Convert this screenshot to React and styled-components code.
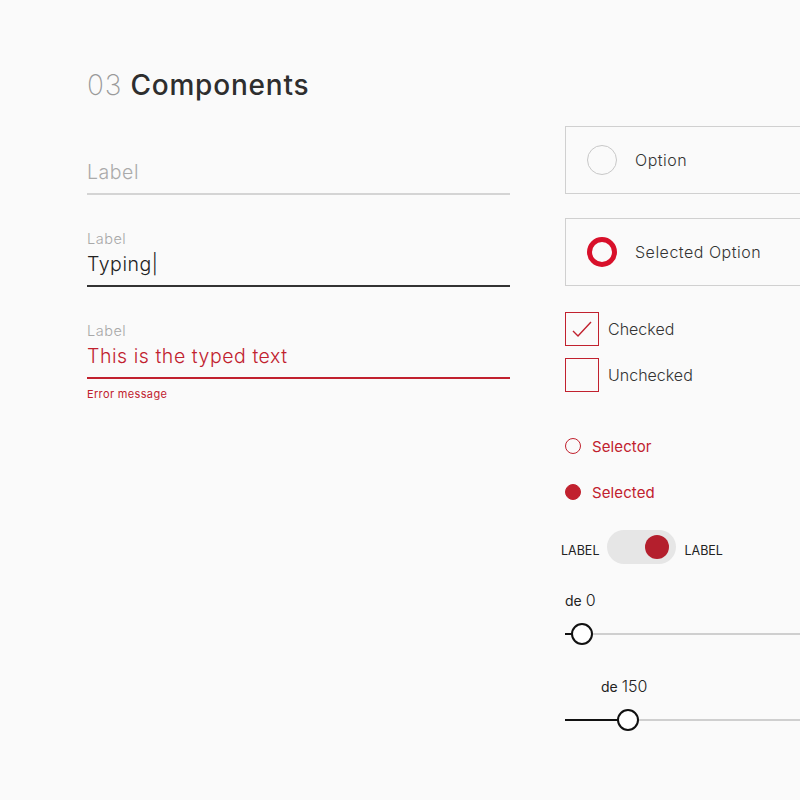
import styled, { createGlobalStyle } from "styled-components";

const RED = "#c1212e";
const BRIGHT_RED = "#d8102a";

const GlobalStyle = createGlobalStyle`
  html, body {
    margin: 0;
    padding: 0;
    background: #fafafa;
  }
  body {
    font-family: Inter, "Noto Sans", sans-serif;
    color: #333;
    overflow: hidden;
  }
`;

const Page = styled.div`
  width: 800px;
  height: 800px;
  box-sizing: border-box;
  padding: 66px 0 0 87px;
  overflow: hidden;
`;

const Title = styled.h1`
  margin: 0;
  font-size: 28px;
  line-height: 38px;
  font-weight: 450;
  color: #2e2e2e;
  letter-spacing: 0.8px;

  span {
    font-weight: 200;
    color: #9a9a9a;
  }
`;

const Columns = styled.div`
  display: grid;
  grid-template-columns: 423px 320px;
  column-gap: 55px;
  margin-top: 22px;
  align-items: start;
`;

const Column = styled.div`
  display: flex;
  flex-direction: column;
`;

const Field = styled.div`
  display: flex;
  flex-direction: column;
  margin-top: ${(p) => p.$top}px;
  padding-bottom: 8px;
  border-bottom: 2px solid ${(p) => p.$line};
`;

const SmallLabel = styled.div`
  font-size: 14.5px;
  line-height: 18px;
  font-weight: 300;
  letter-spacing: 0.5px;
  color: #a8a8a8;
  margin-bottom: 3px;
`;

const Value = styled.div`
  font-size: 19.5px;
  line-height: 26px;
  font-weight: 300;
  letter-spacing: 0.55px;
  color: ${(p) => p.$color};
`;

const ErrorText = styled.div`
  margin-top: 8px;
  font-size: 11px;
  line-height: 14px;
  letter-spacing: 0.35px;
  color: ${RED};
`;

const OptionBox = styled.div`
  display: flex;
  align-items: center;
  gap: 18px;
  height: 68px;
  box-sizing: border-box;
  padding-left: 21px;
  border: 1px solid #d0d0d0;
  margin-bottom: 24px;
  font-size: 16px;
  font-weight: 300;
  letter-spacing: 0.5px;
  color: #333;
`;

const Ring = styled.span`
  width: 30px;
  height: 30px;
  box-sizing: border-box;
  border-radius: 50%;
  border: ${(p) => (p.$on ? `5px solid ${BRIGHT_RED}` : "1px solid #c8c8c8")};
`;

const CheckRow = styled.div`
  display: flex;
  align-items: center;
  gap: 9px;
  margin-top: ${(p) => p.$top}px;
  font-size: 16px;
  font-weight: 300;
  color: #333;
`;

const CheckBox = styled.span`
  width: 34px;
  height: 34px;
  box-sizing: border-box;
  border: 1.5px solid ${RED};
  display: flex;
  align-items: center;
  justify-content: center;
`;

const SelectorRow = styled.div`
  display: flex;
  align-items: center;
  gap: 11px;
  height: 24px;
  margin-top: ${(p) => p.$top}px;
  font-size: 15px;
  font-weight: 400;
  letter-spacing: 0.1px;
  color: ${RED};
`;

const Dot = styled.span`
  width: 16px;
  height: 16px;
  box-sizing: border-box;
  border-radius: 50%;
  border: 1.5px solid ${RED};
  background: ${(p) => (p.$on ? RED : "transparent")};
`;

const ToggleRow = styled.div`
  display: flex;
  align-items: center;
  gap: 8px;
  margin: 26px 0 0 -4px;
`;

const ToggleLabel = styled.span`
  padding-top: 7px;
  font-size: 12.5px;
  font-weight: 400;
  letter-spacing: 0;
  color: #222;
`;

const Track = styled.div`
  width: 69px;
  height: 34px;
  border-radius: 17px;
  background: #e6e6e6;
  display: flex;
  align-items: center;
  justify-content: flex-end;
  padding-right: 7px;
  box-sizing: border-box;
`;

const Knob = styled.span`
  width: 24px;
  height: 24px;
  border-radius: 50%;
  background: #b41f2d;
`;

const Slider = styled.div`
  margin-top: ${(p) => p.$top}px;
  width: 260px;
`;

const SliderLabel = styled.div`
  position: relative;
  height: 20px;
  font-size: 14px;
  line-height: 20px;
  color: #222;

  span {
    position: absolute;
    top: 0;
    white-space: nowrap;
  }

  b {
    font-weight: 300;
    font-size: 16px;
  }
`;

const Rail = styled.div`
  position: relative;
  height: 24px;
  margin-top: 12px;

  &::before {
    content: "";
    position: absolute;
    left: 0;
    right: 0;
    top: 11px;
    height: 2px;
    background: #cfcfcf;
  }
`;

const Fill = styled.span`
  position: absolute;
  left: 0;
  top: 11px;
  height: 2px;
  background: #111;
`;

const Thumb = styled.span`
  position: absolute;
  top: 1px;
  width: 22px;
  height: 22px;
  box-sizing: border-box;
  border-radius: 50%;
  border: 2px solid #111;
  background: #fff;
`;

function RangeSlider({ value, top }) {
  const center = 17 + value * (46 / 150);
  const labelLeft = Math.max(0, center - 27);
  return (
    <Slider $top={top}>
      <SliderLabel>
        <span style={{ left: labelLeft }}>
          de <b>{value}</b>
        </span>
      </SliderLabel>
      <Rail>
        <Fill style={{ width: center }} />
        <Thumb style={{ left: center - 11 }} />
      </Rail>
    </Slider>
  );
}

export default function App() {
  return (
    <>
      <GlobalStyle />
      <Page>
        <Title>
          <span>03</span> Components
        </Title>
        <Columns>
          <Column>
            <Field $top={33} $line="#d4d4d4">
              <Value $color="#aaa">Label</Value>
            </Field>
            <Field $top={35} $line="#333">
              <SmallLabel>Label</SmallLabel>
              <Value $color="#222">Typing|</Value>
            </Field>
            <Field $top={35} $line={RED}>
              <SmallLabel>Label</SmallLabel>
              <Value $color={RED}>This is the typed text</Value>
            </Field>
            <ErrorText>Error message</ErrorText>
          </Column>

          <Column>
            <OptionBox>
              <Ring />
              Option
            </OptionBox>
            <OptionBox>
              <Ring $on />
              Selected Option
            </OptionBox>

            <CheckRow $top={2}>
              <CheckBox>
                <svg width="22" height="18" viewBox="0 0 22 18">
                  <path d="M2 11 L7 16 L20 2" fill="none" stroke={RED} strokeWidth="1.4" />
                </svg>
              </CheckBox>
              Checked
            </CheckRow>
            <CheckRow $top={12}>
              <CheckBox />
              Unchecked
            </CheckRow>

            <SelectorRow $top={42}>
              <Dot />
              Selector
            </SelectorRow>
            <SelectorRow $top={22}>
              <Dot $on />
              Selected
            </SelectorRow>

            <ToggleRow>
              <ToggleLabel>LABEL</ToggleLabel>
              <Track>
                <Knob />
              </Track>
              <ToggleLabel>LABEL</ToggleLabel>
            </ToggleRow>

            <RangeSlider value={0} top={26} />
            <RangeSlider value={150} top={30} />
          </Column>
        </Columns>
      </Page>
    </>
  );
}
